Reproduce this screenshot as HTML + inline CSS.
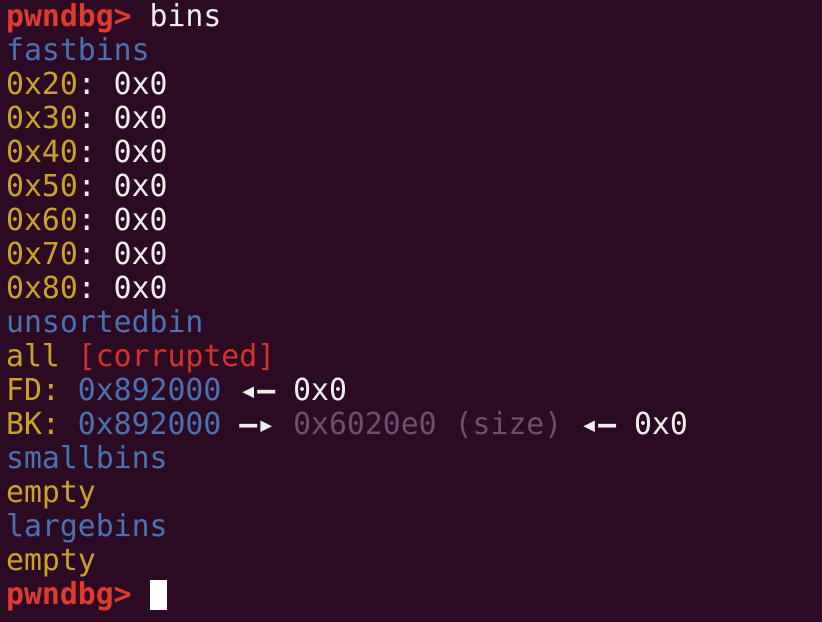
<html><head><style>
body{margin:0;background:#2d0a23;width:822px;height:622px;overflow:hidden}
pre{margin:0;padding:0 0 0 6px;font-family:"DejaVu Sans Mono",monospace;font-size:29.8px;line-height:34px;color:#eeeeec;position:relative;top:0px}
.r{color:#e03a2e;font-weight:bold}.y{color:#c9a227}.b{color:#4a72b0}.rd{color:#d0342c}.p{color:#6f4e6f}
.cur{display:inline-block;width:17px;height:30px;background:#fff;vertical-align:-6px}
.a{font-weight:bold}
</style></head><body><pre><span class="r">pwndbg&gt;</span> bins
<span class="b">fastbins</span>
<span class="y">0x20</span>: 0x0
<span class="y">0x30</span>: 0x0
<span class="y">0x40</span>: 0x0
<span class="y">0x50</span>: 0x0
<span class="y">0x60</span>: 0x0
<span class="y">0x70</span>: 0x0
<span class="y">0x80</span>: 0x0
<span class="b">unsortedbin</span>
<span class="y">all</span> <span class="rd">[corrupted]</span>
<span class="y">FD:</span> <span class="b">0x892000</span> <span class="a">◂—</span> 0x0
<span class="y">BK:</span> <span class="b">0x892000</span> <span class="a">—▸</span> <span class="p">0x6020e0 (size)</span> <span class="a">◂—</span> 0x0
<span class="b">smallbins</span>
<span class="y">empty</span>
<span class="b">largebins</span>
<span class="y">empty</span>
<span class="r">pwndbg&gt;</span> <span class="cur"></span></pre></body></html>
